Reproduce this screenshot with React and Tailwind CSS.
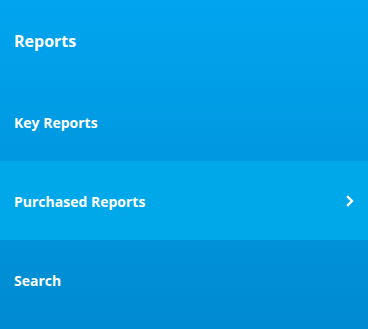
export default function App() {
  const font = { fontFamily: '"Open Sans", "Noto Sans", sans-serif' };
  return (
    <div className="w-[368px] h-[329px] bg-gradient-to-b from-[#00a5ef] to-[#008ad0] text-white overflow-hidden" style={font}>
      <div className="h-[82px] flex items-center px-[14px] text-[16px] font-bold">Reports</div>
      <div className="h-[79px] flex items-center px-[14px] pt-[1px] text-[14px] font-bold">Key Reports</div>
      <div className="h-[79px] flex items-center justify-between pl-[14px] pr-[13px] pt-[1px] text-[14px] font-bold bg-[#00a8e9]">
        <span>Purchased Reports</span>
        <svg width="10" height="12" viewBox="0 0 10 12" fill="none" stroke="white" strokeWidth="2.4" strokeLinecap="square">
          <path d="M3 2 L7 6 L3 10" />
        </svg>
      </div>
      <div className="h-[79px] flex items-center px-[14px] pt-[1px] text-[14px] font-bold">Search</div>
    </div>
  );
}
